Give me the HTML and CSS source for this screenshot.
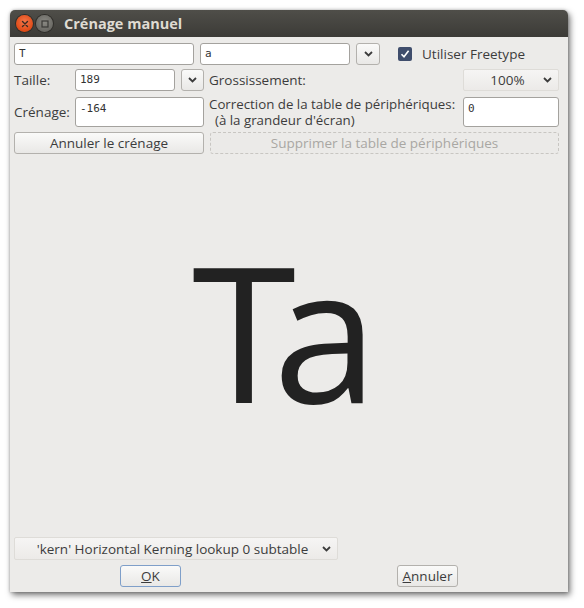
FILE: index.html
```html
<!DOCTYPE html>
<html lang="fr">
<head>
<meta charset="utf-8">
<title>Crénage manuel</title>
<link rel="stylesheet" href="styles.css">
</head>
<body>
<div class="window">
  <div class="titlebar">
    <span class="wbtn close"><svg width="8" height="8" viewBox="0 0 8 8"><path d="M1.5 1.5 L6.5 6.5 M6.5 1.5 L1.5 6.5" stroke="#3a2a22" stroke-width="1.4" stroke-linecap="round"/></svg></span>
    <span class="wbtn max"><svg width="8" height="8" viewBox="0 0 8 8"><rect x="1" y="1" width="6" height="6" fill="none" stroke="#3a3936" stroke-width="1.2"/></svg></span>
    <span class="title">Crénage manuel</span>
  </div>
  <div class="body">
    <div class="row r1">
      <div class="entry w180">T</div>
      <div class="entry w150">a</div>
      <div class="btn drop w24"><svg width="9" height="6" viewBox="0 0 9 6"><path d="M1 1 L4.5 4.5 L8 1" fill="none" stroke="#3c3c3c" stroke-width="1.8"/></svg></div>
      <div class="check"><svg width="10" height="10" viewBox="0 0 10 10"><path d="M1.5 5.2 L4 7.8 L8.6 1.8" fill="none" stroke="#fff" stroke-width="1.6"/></svg></div>
      <span class="lbl freetype">Utiliser Freetype</span>
    </div>
    <div class="row r2">
      <span class="lbl side">Taille:</span>
      <div class="entry w100">189</div>
      <div class="btn drop w23"><svg width="9" height="6" viewBox="0 0 9 6"><path d="M1 1 L4.5 4.5 L8 1" fill="none" stroke="#3c3c3c" stroke-width="1.8"/></svg></div>
      <span class="lbl mid">Grossissement:</span>
      <div class="combo w96"><span class="ctext">100%</span><svg width="9" height="6" viewBox="0 0 9 6"><path d="M1 1 L4.5 4.5 L8 1" fill="none" stroke="#3c3c3c" stroke-width="1.8"/></svg></div>
    </div>
    <div class="row r3">
      <span class="lbl side">Crénage:</span>
      <div class="entry w129 tall">-164</div>
      <div class="lbl mid two"><div>Correction de la table de périphériques:</div><div class="indent">(à la grandeur d'écran)</div></div>
      <div class="entry w96 tall">0</div>
    </div>
    <div class="row r4">
      <div class="btn w190">Annuler le crénage</div>
      <div class="btn disabled grow">Supprimer la table de périphériques</div>
    </div>
    <div class="canvas"><span class="glyphs">Ta</span></div>
    <div class="row r5">
      <div class="combo wide"><span class="ctext">'kern' Horizontal Kerning lookup 0 subtable</span><svg width="9" height="6" viewBox="0 0 9 6"><path d="M1 1 L4.5 4.5 L8 1" fill="none" stroke="#3c3c3c" stroke-width="1.8"/></svg></div>
    </div>
    <div class="row r6">
      <div class="btn action ok"><span class="u">O</span>K</div>
      <div class="btn action cancel"><span class="u">A</span>nnuler</div>
    </div>
  </div>
</div>
</body>
</html>
```
FILE: styles.css
```css
html, body {
  margin: 0;
  padding: 0;
  background: #ffffff;
}
body {
  width: 584px;
  height: 608px;
  overflow: hidden;
  font-family: "Open Sans", "Noto Sans", sans-serif;
  font-size: 13.5px;
  color: #3c3c3c;
}
.window {
  margin: 10px 0 0 10px;
  width: 558px;
  height: 582px;
  background: #ecebe9;
  border-radius: 5px 5px 0 0;
  box-shadow: 2px 3px 6px rgba(0,0,0,0.55), 0 0 3px rgba(0,0,0,0.25);
  display: flex;
  flex-direction: column;
}
.titlebar {
  height: 27px;
  flex: none;
  background: linear-gradient(#4f4e49, #3c3b37);
  border-radius: 5px 5px 0 0;
  display: flex;
  align-items: center;
  padding-left: 6px;
}
.wbtn {
  width: 17px;
  height: 17px;
  border-radius: 50%;
  display: flex;
  align-items: center;
  justify-content: center;
  margin-right: 3px;
}
.close {
  background: radial-gradient(circle at 50% 40%, #f5774a, #df4a16 70%);
  box-shadow: 0 0 0 1px #2f2e2a;
}
.max {
  background: radial-gradient(circle at 50% 40%, #8a8983, #6a6964 70%);
  box-shadow: 0 0 0 1px #2f2e2a;
}
.title {
  margin-left: 8px;
  font-weight: bold;
  font-size: 14.5px;
  color: #dfdbd2;
  font-family: "Open Sans", sans-serif;
}
.body {
  flex: 1;
  display: flex;
  flex-direction: column;
  padding: 6px 9px 5px 4px;
}
.row {
  display: flex;
  align-items: center;
  white-space: nowrap;
}
.r1 { height: 22px; }
.r2 { height: 22px; margin-top: 4px; }
.r3 { height: 30px; margin-top: 6px; }
.r4 { height: 22px; margin-top: 5px; }
.r5 { height: 23px; }
.r6 { height: 22px; margin-top: 5px; }
.entry {
  box-sizing: border-box;
  height: 22px;
  background: #fff;
  border: 1px solid #a4a29e;
  border-radius: 3px;
  font-family: "DejaVu Sans Mono", monospace;
  font-size: 11px;
  color: #333;
  padding: 3px 4px 0 4px;
  margin-right: 6px;
  flex: none;
}
.entry.tall { height: 30px; padding-top: 4px; }
.w180 { width: 180px; }
.w150 { width: 150px; }
.w100 { width: 100px; }
.w129 { width: 129px; margin-right: 0; }
.w96 { width: 96px; margin-right: 0; }
.btn {
  box-sizing: border-box;
  height: 22px;
  border: 1px solid #b3b1ad;
  border-radius: 3px;
  background: linear-gradient(#fafaf9, #e9e8e6);
  display: flex;
  align-items: center;
  justify-content: center;
  flex: none;
}
.w24 { width: 24px; }
.w23 { width: 23px; }
.w190 { width: 190px; margin-right: 6px; }
.grow { flex: 1; }
.btn.disabled {
  background: #ebeae8;
  border: 1px dashed #c8c6c2;
  color: #a9a7a3;
}
.check {
  width: 14px;
  height: 14px;
  box-sizing: border-box;
  background: #3f4d6c;
  border-radius: 2px;
  margin-left: 18px;
  display: flex;
  align-items: center;
  justify-content: center;
}
.freetype { margin-left: 10px; }
.side { width: 61px; flex: none; }
.mid { margin-left: 5px; flex: 1; }
.two { line-height: 16px; font-size: 13.3px; margin-top: -1px; }
.indent { padding-left: 6px; }
.combo {
  box-sizing: border-box;
  height: 22px;
  border: 1px solid #dedcd8;
  border-radius: 2px;
  background: linear-gradient(#f6f5f4, #eceae8);
  display: flex;
  align-items: center;
  padding: 0 6px 0 8px;
  flex: none;
}
.combo .ctext { flex: 1; text-align: center; }
.combo.wide { width: 324px; height: 23px; }
.canvas {
  flex: 1;
  position: relative;
  overflow: hidden;
}
.glyphs {
  position: absolute;
  left: 178px;
  top: 81px;
  font-family: "Open Sans", sans-serif;
  font-size: 189px;
  line-height: 189px;
  letter-spacing: -23px;
  color: #222;
}
.action { width: 61px; }
.ok {
  margin-left: 106px;
  border-color: #7f9fc9;
}
.cancel { margin-left: 216px; }
.u { text-decoration: underline; }
```
